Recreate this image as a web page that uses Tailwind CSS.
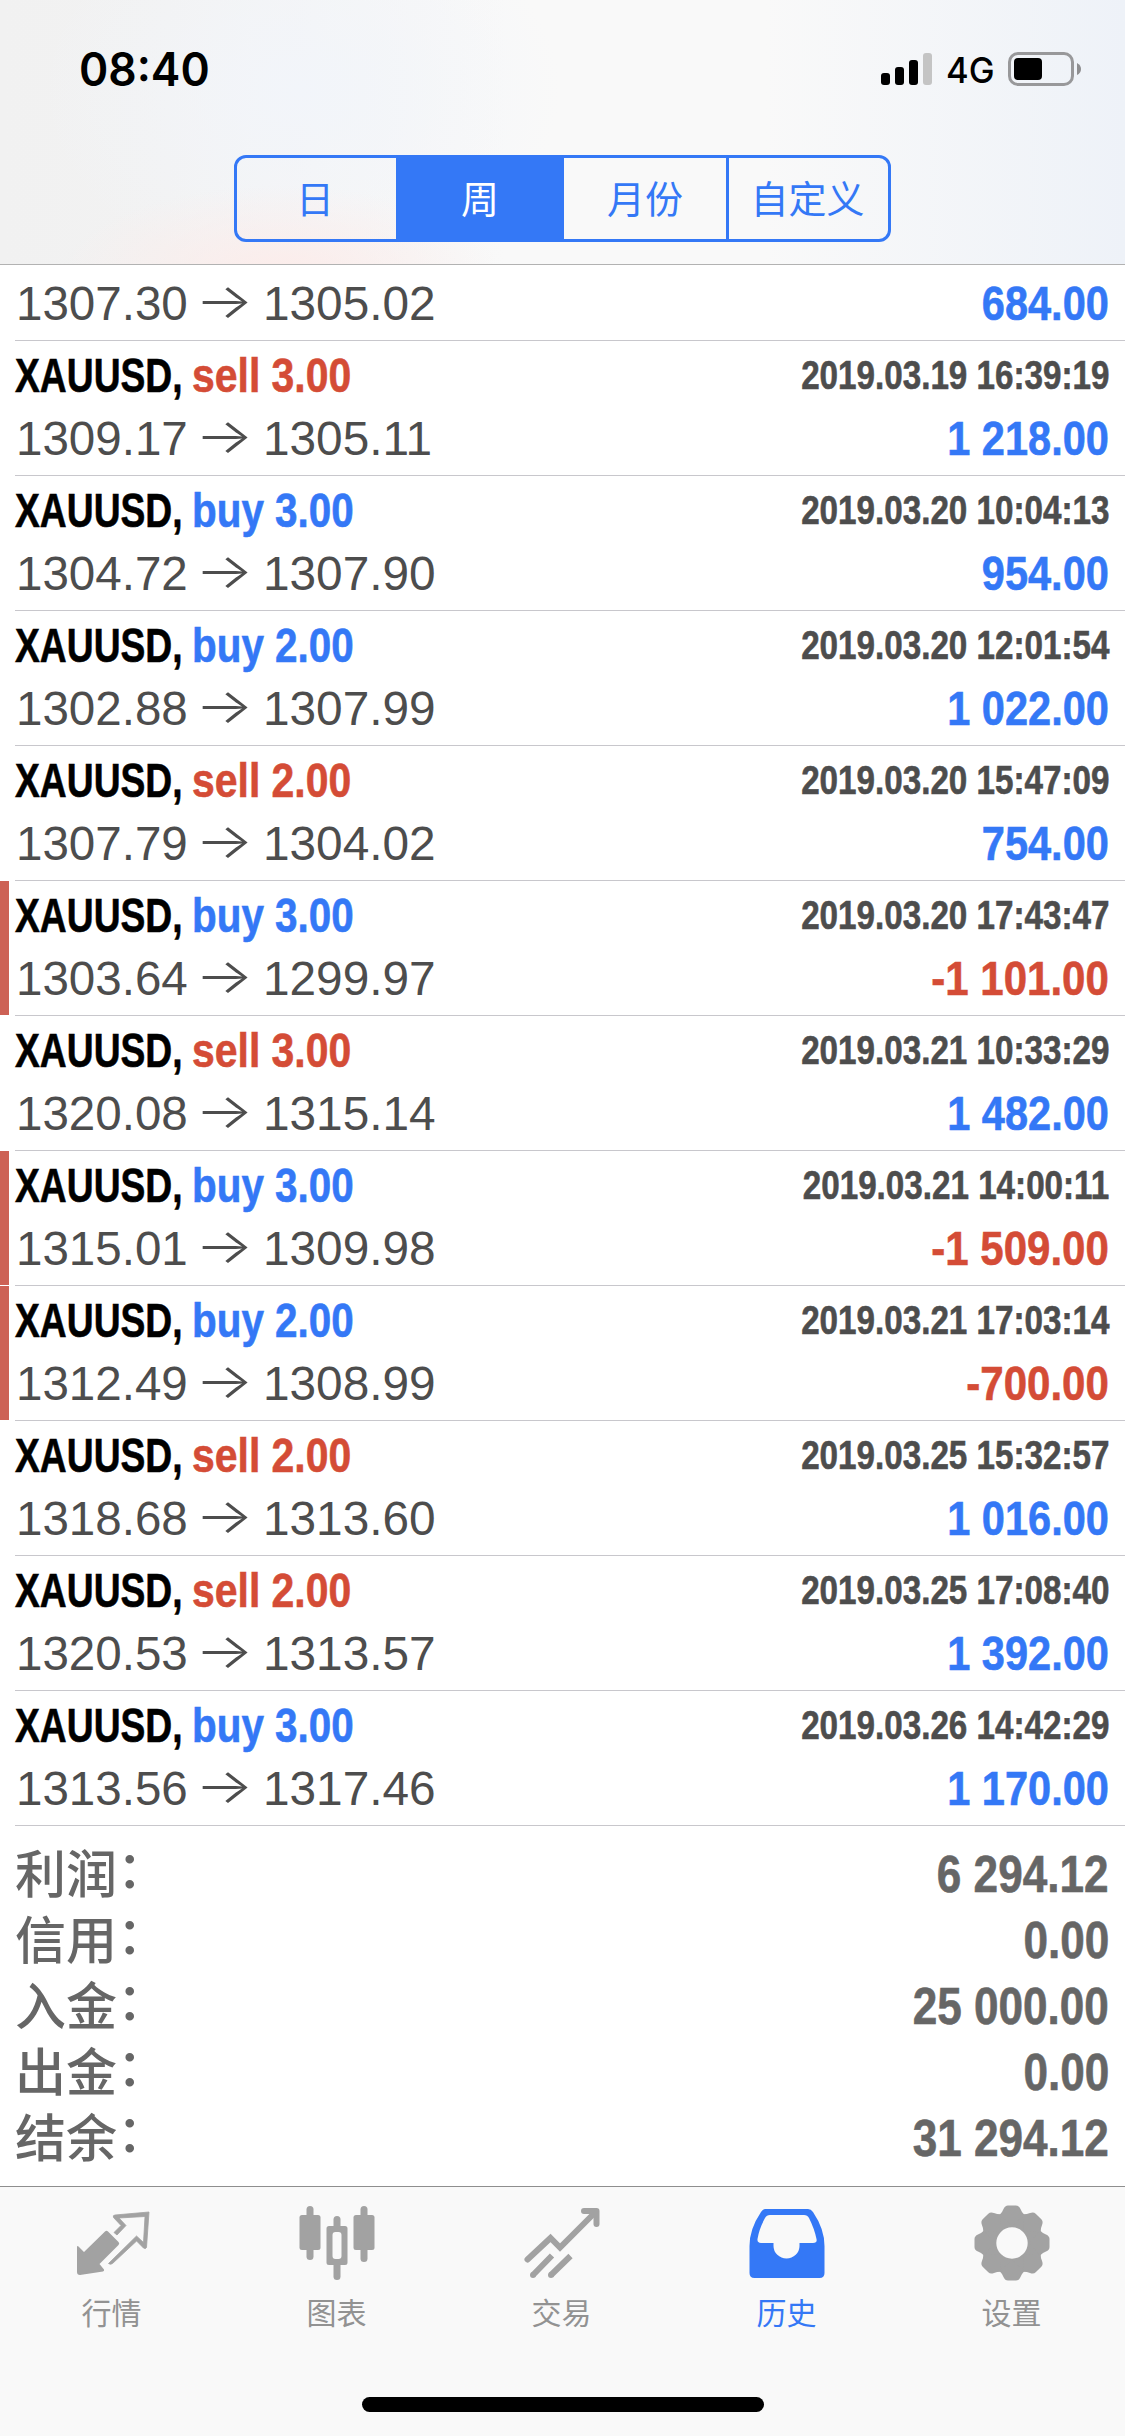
<!DOCTYPE html>
<html lang="zh-CN">
<head>
<meta charset="utf-8">
<title>历史</title>
<script src="https://cdn.jsdelivr.net/npm/@tailwindcss/browser@4"></script>
</head>
<body class="bg-white">
<div class="w-[1125px] h-[2436px] flex flex-col overflow-hidden bg-white font-['Liberation_Sans','Noto_Sans_CJK_SC',sans-serif]">
  <header class="h-[265px] shrink-0 flex flex-col border-b border-[#b2b2b2] bg-[radial-gradient(ellipse_220px_90px_at_280px_275px,#fcecea_0%,#fcecea00_100%),radial-gradient(ellipse_260px_190px_at_300px_90px,#f2f5fa_0%,#f2f5fa00_100%),linear-gradient(90deg,#f1f1f1_0%,#f2f2f2_15%,#f9f9f9_45%,#f9f9f9_68%,#eef2f8_100%)]">
    <div class="h-[155px] flex items-start justify-between pl-[79px] pr-[43px] font-['Inter',sans-serif] text-black">
      <div class="mt-[41px] text-[46px] leading-[56px] font-semibold origin-left scale-x-[0.965]">08:40</div>
      <div class="flex mt-[52px] h-[34px]">
        <div class="flex items-end gap-[5px] h-[33px]">
          <i class="w-[9px] h-[12px] rounded-[3px] bg-black"></i>
          <i class="w-[9px] h-[18px] rounded-[3px] bg-black"></i>
          <i class="w-[9px] h-[25px] rounded-[3px] bg-black"></i>
          <i class="w-[9px] h-[32px] rounded-[3px] bg-[#c4c4c4]"></i>
        </div>
        <div class="w-[76px] pl-[14px] text-[36px] leading-[36px] font-[450] whitespace-nowrap"><span class="inline-block origin-left scale-x-[0.96]">4G</span></div>
        <svg width="74" height="34" viewBox="0 0 74 34"><rect x="1.5" y="1.5" width="63" height="31" rx="8.5" fill="none" stroke="#98989a" stroke-width="3"/><rect x="6" y="6" width="28" height="22" rx="4" fill="#000"/><path d="M69 11q4 2 4 6t-4 6z" fill="#8e8e90"/></svg>
      </div>
    </div>
    <div class="mx-auto w-[657px] h-[87px] flex rounded-[12px] border-[3px] border-[#3478f6] overflow-hidden text-[#3478f6] text-[38px] leading-[77px] text-center font-['Noto_Sans_CJK_SC',sans-serif]">
      <div class="w-[159px] pr-[3px]">日</div>
      <div class="w-[168px] bg-[#3478f6] text-white">周</div>
      <div class="w-[165px] border-r-[3px] border-[#3478f6]">月份</div>
      <div class="flex-1 pr-[2px]">自定义</div>
    </div>
  </header>

  <main id="list" class="shrink-0"></main>

  <section id="totals" class="flex-1 pt-[16px] text-[#666] bg-white"></section>

  <nav class="h-[250px] shrink-0 flex flex-col bg-[#f9f9f9] border-t border-[#8e8e8e]">
    <div class="-ml-px mr-px h-[210px] grid grid-cols-5 text-[#929292] text-[30px] leading-[40px] font-['Noto_Sans_CJK_SC',sans-serif]">
      <div class="flex flex-col items-center pt-[18px] gap-[10px]">
        <svg width="76" height="76" viewBox="0 0 76 76"><path d="M31 26.500Q32.500 25 34 26.500L44.500 37Q46 38.500 44.500 40L25.500 59L30 64.500Q30.500 66 29 66.500L6 70Q3 70 3 67V42.500Q3 40 5 42L10 47Z" fill="#a2a2a2"/><path d="M40 27.500L47 20.500L39.500 12.500Q38.500 10.300 41 10L75 7L72.500 42.500Q72 44.300 69.500 43L62.600 36L38.500 58.500Q36.500 60 34.500 58.500L62.500 31L69.500 37.500L71 11.500L45 13L52 20.500L43 30Z" fill="#a2a2a2" stroke="#a2a2a2" stroke-width=".8"/></svg>
        <span>行情</span></div>
      <div class="flex flex-col items-center pt-[18px] gap-[10px]">
        <svg width="76" height="76" viewBox="0 0 76 76" fill="#a2a2a2"><rect x="7.500" y="1" width="7" height="54" rx="3.500"/><rect x=".5" y="10" width="21" height="35" rx="2.500"/><rect x="61.500" y="1" width="7" height="56" rx="3.500"/><rect x="54.500" y="10" width="21" height="35" rx="2.500"/><rect x="34.500" y="11" width="7" height="15" rx="3.500"/><rect x="34.500" y="55" width="7" height="20" rx="3.500"/><path fill-rule="evenodd" d="M30 21h16q2.500 0 2.500 2.500v34q0 2.500-2.500 2.500H30q-2.500 0-2.500-2.500v-34q0-2.500 2.500-2.500zM36.500 27q-3 0-3 3v21q0 3 3 3h3q3 0 3-3V30q0-3-3-3z"/></svg>
        <span>图表</span></div>
      <div class="flex flex-col items-center pt-[18px] gap-[10px]">
        <svg width="76" height="76" viewBox="0 0 76 76" fill="none" stroke="#a2a2a2" stroke-width="6"><path d="M3.500 54.500L26.500 33L36 42.500L71 7.500" stroke-linecap="round"/><path d="M60 6H72.500V19" stroke-linecap="round" stroke-linejoin="round"/><path d="M9 70L28 50.500M27 70L46.500 51"/><g fill="#a2a2a2" stroke="none"><circle cx="9" cy="70" r="3"/><circle cx="27" cy="70" r="3"/></g></svg>
        <span>交易</span></div>
      <div class="flex flex-col items-center pt-[18px] gap-[10px] text-[#3478f6]">
        <svg width="76" height="76" viewBox="0 0 76 76" fill="#3478f6"><path fill-rule="evenodd" d="M16 4H59Q62 4 64 7Q75.500 24 75.500 41V68Q75.500 73 70.500 73H5.500Q.5 73 .5 68V41Q.5 24 12 7Q14 4 16 4ZM21 10Q17.500 10 16 13Q10 24 8.500 34Q8 38 12 38H24.500V41A13 12.500 0 0 0 50.500 41V38H64Q68.500 38 67.500 34Q65.500 24 60 13Q58.500 10 55 10Z"/></svg>
        <span>历史</span></div>
      <div class="flex flex-col items-center pt-[18px] gap-[10px]">
        <svg width="76" height="76" viewBox="-38 -38 76 76" fill="#a2a2a2"><defs><path id="t" d="M-12.500 -28Q-9.500 -31 -8.500 -34Q-7 -37.500 -4 -37.500H4Q7 -37.500 8.500 -34Q9.500 -31 12.500 -28L0 -17Z"/></defs><path fill-rule="evenodd" d="M0 -30A30 30 0 1 1 0 30A30 30 0 1 1 0 -30ZM0 -15.700A15.700 15.700 0 1 0 0 15.700A15.700 15.700 0 1 0 0 -15.700Z"/><use href="#t"/><use href="#t" transform="rotate(45)"/><use href="#t" transform="rotate(90)"/><use href="#t" transform="rotate(135)"/><use href="#t" transform="rotate(180)"/><use href="#t" transform="rotate(225)"/><use href="#t" transform="rotate(270)"/><use href="#t" transform="rotate(315)"/></svg>
        <span>设置</span></div>
    </div>
    <div class="mx-auto w-[402px] h-[15px] rounded-full bg-black"></div>
  </nav>
</div>
<script>
const deals = [
  ["sell","3.00","2019.03.19 16:39:19","1309.17","1305.11","1 218.00"],
  ["buy","3.00","2019.03.20 10:04:13","1304.72","1307.90","954.00"],
  ["buy","2.00","2019.03.20 12:01:54","1302.88","1307.99","1 022.00"],
  ["sell","2.00","2019.03.20 15:47:09","1307.79","1304.02","754.00"],
  ["buy","3.00","2019.03.20 17:43:47","1303.64","1299.97","-1 101.00"],
  ["sell","3.00","2019.03.21 10:33:29","1320.08","1315.14","1 482.00"],
  ["buy","3.00","2019.03.21 14:00:11","1315.01","1309.98","-1 509.00"],
  ["buy","2.00","2019.03.21 17:03:14","1312.49","1308.99","-700.00"],
  ["sell","2.00","2019.03.25 15:32:57","1318.68","1313.60","1 016.00"],
  ["sell","2.00","2019.03.25 17:08:40","1320.53","1313.57","1 392.00"],
  ["buy","3.00","2019.03.26 14:42:29","1313.56","1317.46","1 170.00"],
];
const tone = neg => neg ? "text-[#d44c36]" : "text-[#3478f6]";
const prices = (a, b, p) => `
  <div class="flex items-center justify-between h-[56px] text-[48px] leading-[56px] whitespace-nowrap">
    <div class="flex text-[#4d4d4d]"><span class="w-[180px] pl-px"><span class="inline-block origin-left scale-x-[0.99]">${a}</span></span><span class="w-[68px] font-['Inter'] font-light"><span class="inline-block origin-left scale-x-[1.28] -translate-y-[3px]">→</span></span><span class="inline-block origin-left scale-x-[0.995]">${b}</span></div>
    <div class="font-bold origin-right ${p[0] === "-" ? "scale-x-[0.875]" : "scale-x-[0.865]"} [-webkit-text-stroke:0.6px_currentColor] ${tone(p[0] === "-")}">${p}</div>
  </div>`;
let html = `<div class="h-[76px] flex"><div class="w-[15px]"></div><div class="flex-1 pr-[16px] pt-[11px] border-b border-[#c8c7cc]">${prices("1307.30","1305.02","684.00")}</div></div>`;
for (const [side, lot, time, a, b, p] of deals) {
  html += `<div class="h-[135px] flex">
    <div class="w-[15px] pb-px"><div class="h-full w-[9px] ${p[0] === "-" ? "bg-[#cd6155]" : ""}"></div></div>
    <div class="flex-1 flex flex-col pr-[16px] border-b border-[#c8c7cc]">
      <div class="h-[70px] pt-[6px] flex justify-between font-bold whitespace-nowrap [-webkit-text-stroke:0.6px_currentColor]">
        <div class="flex text-[49px] leading-[56px]"><span class="w-[177px] text-black"><span class="inline-block origin-left scale-x-[0.76]">XAUUSD,</span></span><span class="origin-left ${side === "sell" ? "scale-x-[0.835]" : "scale-x-[0.825]"} ${tone(side === "sell")}">${side} ${lot}</span></div>
        <div class="text-[40px] leading-[56px] text-[#4d4d4d] origin-right scale-x-[0.83]">${time}</div>
      </div>
      ${prices(a, b, p)}
    </div></div>`;
}
document.getElementById("list").innerHTML = html;
document.getElementById("totals").innerHTML = [["利润","6 294.12"],["信用","0.00"],["入金","25 000.00"],["出金","0.00"],["结余","31 294.12"]].map(([k, v]) =>
  `<div class="h-[66px] pl-[15px] pr-[16px] flex items-start justify-between text-[51px] leading-[66px] whitespace-nowrap"><div class="-mt-[4px] flex font-['Noto_Sans_CJK_SC'] font-medium"><span>${k}</span><span class="-mt-[5px]">：</span></div><span class="font-bold origin-right scale-x-[0.865] [-webkit-text-stroke:0.6px_currentColor]">${v}</span></div>`).join("");
</script>
</body>
</html>
